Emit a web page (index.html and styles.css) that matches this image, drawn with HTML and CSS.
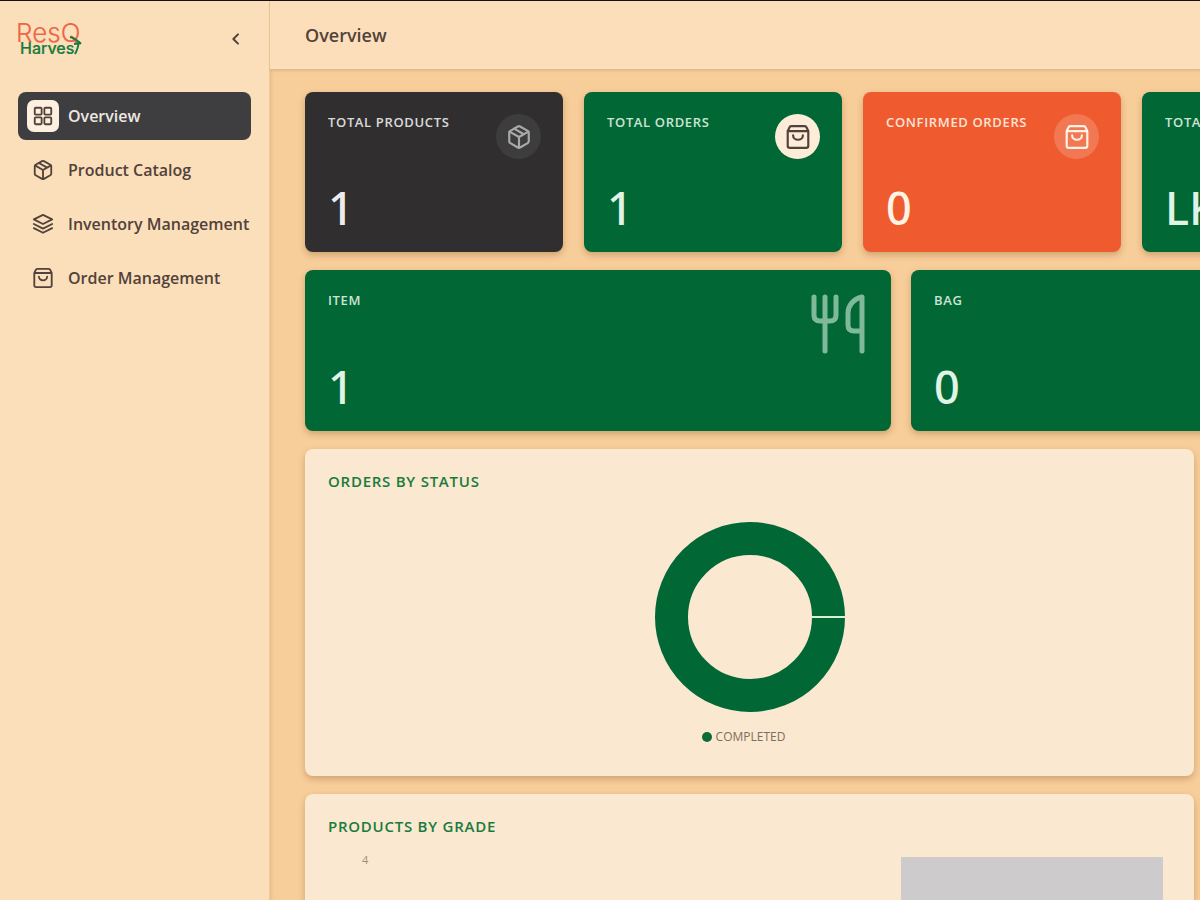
FILE: index.html
```html
<!DOCTYPE html>
<html lang="en">
<head>
    <meta charset="UTF-8">
    <meta name="viewport" content="width=device-width, initial-scale=1.0">
    <title>ResQ Harvest - Overview</title>
    <link rel="stylesheet" href="styles.css">
</head>
<body>
    <!-- Shared icons -->
    <svg class="sprite" aria-hidden="true">
        <symbol id="icon-grid" viewBox="0 0 24 24">
            <rect x="3" y="3" width="7.500" height="7.500" rx="1"/>
            <rect x="13.500" y="3" width="7.500" height="7.500" rx="1"/>
            <rect x="3" y="13.500" width="7.500" height="7.500" rx="1"/>
            <rect x="13.500" y="13.500" width="7.500" height="7.500" rx="1"/>
        </symbol>
        <symbol id="icon-box" viewBox="0 0 24 24">
            <path d="M11 21.7a2 2 0 0 0 2 0l7-4a2 2 0 0 0 1-1.7V8a2 2 0 0 0-1-1.7l-7-4a2 2 0 0 0-2 0l-7 4A2 2 0 0 0 3 8v8a2 2 0 0 0 1 1.7z"/>
            <path d="M12 22V12M3.3 7 12 12l8.7-5M7.5 4.3l9 5.1"/>
        </symbol>
        <symbol id="icon-layers" viewBox="0 0 24 24">
            <path d="M12 2 22 7 12 12 2 7z"/>
            <path d="m2 12 10 5 10-5M2 16.500l10 5 10-5"/>
        </symbol>
        <symbol id="icon-bag" viewBox="0 0 24 24">
            <path d="M2.500 6.500V20a2 2 0 0 0 2 2h15a2 2 0 0 0 2-2V6.500L20 3.500A2 2 0 0 0 18 2H6a2 2 0 0 0-2 1.500zM2.500 6.500h19"/>
            <path d="M16.500 10.500c0 2.300-2 4-4.500 4s-4.500-1.700-4.500-4"/>
        </symbol>
        <symbol id="icon-cutlery" viewBox="0 0 56 60">
            <path d="M4 3v18q0 6 6 6h10q6 0 6-6V3M15 3v54M52 57V3c-9 2-14 9-14 16v12q0 6 6 6h7"/>
        </symbol>
    </svg>

    <div class="app">
        <aside class="sidebar">
            <div class="brand">
                <svg class="logo" viewBox="0 0 68 40" role="img" aria-label="ResQ Harvest">
                    <text class="logo-top" x="-2" y="23">ResQ</text>
                    <text class="logo-bottom" x="2" y="35">Harves</text>
                    <path class="logo-leaf" d="M52 18q5 1 11 7M57 35q3-5 4-13M56 25l7-1"/>
                </svg>
                <button class="collapse" type="button" aria-label="Collapse sidebar">
                    <svg class="icon" viewBox="0 0 24 24"><path d="m15 5-7 7 7 7"/></svg>
                </button>
            </div>
            <nav class="menu">
                <a class="menu-item active" href="#">
                    <span class="menu-icon"><svg class="icon"><use href="#icon-grid"/></svg></span>
                    Overview
                </a>
                <a class="menu-item" href="#">
                    <span class="menu-icon"><svg class="icon"><use href="#icon-box"/></svg></span>
                    Product Catalog
                </a>
                <a class="menu-item" href="#">
                    <span class="menu-icon"><svg class="icon"><use href="#icon-layers"/></svg></span>
                    Inventory Management
                </a>
                <a class="menu-item" href="#">
                    <span class="menu-icon"><svg class="icon"><use href="#icon-bag"/></svg></span>
                    Order Management
                </a>
            </nav>
        </aside>

        <div class="page">
            <header class="topbar">
                <h1>Overview</h1>
            </header>

            <main class="content">
                <section class="stats">
                    <div class="card dark">
                        <h2>Total Products</h2>
                        <span class="badge"><svg class="icon"><use href="#icon-box"/></svg></span>
                        <p class="value">1</p>
                    </div>
                    <div class="card">
                        <h2>Total Orders</h2>
                        <span class="badge light"><svg class="icon"><use href="#icon-bag"/></svg></span>
                        <p class="value">1</p>
                    </div>
                    <div class="card orange">
                        <h2>Confirmed Orders</h2>
                        <span class="badge"><svg class="icon"><use href="#icon-bag"/></svg></span>
                        <p class="value">0</p>
                    </div>
                    <div class="card">
                        <h2>Total</h2>
                        <p class="value">LKR</p>
                    </div>
                </section>

                <section class="stats wide">
                    <div class="card">
                        <h2>Item</h2>
                        <svg class="cutlery"><use href="#icon-cutlery"/></svg>
                        <p class="value">1</p>
                    </div>
                    <div class="card">
                        <h2>Bag</h2>
                        <p class="value">0</p>
                    </div>
                </section>

                <section class="panel">
                    <h2>Orders by Status</h2>
                    <svg class="donut" viewBox="0 0 190 190" role="img" aria-label="Completed orders">
                        <circle class="donut-ring" cx="95" cy="95" r="78.500"/>
                        <path class="donut-gap" d="M157 95h33"/>
                    </svg>
                    <p class="legend"><span class="dot"></span>COMPLETED</p>
                </section>

                <section class="panel">
                    <h2>Products by Grade</h2>
                    <div class="bar-chart">
                        <span class="tick">4</span>
                        <div class="bar"></div>
                    </div>
                </section>
            </main>
        </div>
    </div>
</body>
</html>
```

FILE: styles.css
```css
* {
    margin: 0;
    padding: 0;
    box-sizing: border-box;
}

body {
    font-family: "Open Sans", "Noto Sans", sans-serif;
    color: #51423b;
    background: #f7cd99;
    border-top: 1px solid #141010;
    height: 100vh;
    overflow: hidden;
}

.sprite {
    display: none;
}

.icon {
    width: 20px;
    height: 20px;
    fill: none;
    stroke: currentColor;
    stroke-width: 2;
    stroke-linecap: round;
    stroke-linejoin: round;
}

.app {
    display: flex;
    height: 100%;
}

/* Sidebar */
.sidebar {
    flex: 0 0 270px;
    min-width: 0;
    padding: 18px;
    background: #fbdfba;
    border-right: 1px solid #eecb9c;
    box-shadow: 1px 0 3px rgba(120, 70, 20, 0.15);
}

.brand {
    display: flex;
    justify-content: space-between;
    align-items: center;
    height: 40px;
    margin-bottom: 33px;
}

.logo {
    width: 68px;
    height: 40px;
    overflow: visible;
}

.logo text {
    font-family: Inter, sans-serif;
}

.logo-top {
    font-size: 26px;
    font-weight: 300;
    fill: #ee6547;
    stroke: #ee6547;
    stroke-width: 0.2;
}

.logo-bottom {
    font-size: 16px;
    font-weight: 500;
    fill: #187b3e;
    stroke: #187b3e;
    stroke-width: 0.2;
}

.logo-leaf {
    fill: none;
    stroke: #187b3e;
    stroke-width: 2;
}

.collapse {
    width: 30px;
    height: 30px;
    border: none;
    background: none;
    color: #51423b;
    cursor: pointer;
}

.collapse .icon {
    display: block;
    width: 16px;
    height: 16px;
    margin: auto;
    stroke-width: 3;
}

.menu {
    display: flex;
    flex-direction: column;
    gap: 6px;
}

.menu-item {
    display: flex;
    align-items: center;
    gap: 9px;
    height: 48px;
    padding-left: 9px;
    border-radius: 8px;
    color: #51423b;
    font-size: 16px;
    font-weight: 600;
    text-decoration: none;
    white-space: nowrap;
}

.menu-icon {
    display: flex;
    flex: none;
    align-items: center;
    justify-content: center;
    width: 32px;
    height: 32px;
    border-radius: 7px;
}

.menu-icon .icon {
    width: 22px;
    height: 22px;
}

.menu-item.active {
    background: #3e3d3f;
    color: #eee8e2;
}

.active .menu-icon {
    background: #fdf0e0;
    color: #51423b;
}

/* Page */
.page {
    flex: 1;
    min-width: 0;
}

.topbar {
    display: flex;
    align-items: center;
    height: 69px;
    padding: 0 35px;
    background: #fcdfba;
    border-bottom: 1px solid #dfbe8e;
    box-shadow: 0 1px 2px rgba(120, 70, 20, 0.15);
}

.topbar h1 {
    font-size: 18px;
    font-weight: 600;
}

.content {
    display: flex;
    flex-direction: column;
    gap: 18px;
    padding: 22px 35px;
}

.stats {
    display: grid;
    grid-template-columns: repeat(4, 258px);
    gap: 21px;
}

.stats.wide {
    grid-template-columns: repeat(2, 586px);
    gap: 20px;
}

.card {
    display: grid;
    grid-template-columns: 1fr auto;
    align-content: space-between;
    min-height: 160px;
    padding: 22px 22px 22px 23px;
    border-radius: 8px;
    background: #006735;
    color: #e0f3e4;
    box-shadow: 0 3px 6px rgba(120, 70, 20, 0.3);
}

.wide .card {
    min-height: 161px;
}

.card.dark {
    background: #312e30;
    color: #ececec;
}

.card.orange {
    background: #ef5b2e;
    color: #fff3e6;
}

.card h2 {
    font-size: 13px;
    font-weight: 600;
    line-height: 16px;
    letter-spacing: 0.05em;
    text-transform: uppercase;
    opacity: 0.9;
}

.badge {
    display: flex;
    align-items: center;
    justify-content: center;
    width: 45px;
    height: 45px;
    border-radius: 50%;
    background: rgba(255, 255, 255, 0.18);
}

.badge .icon {
    width: 26px;
    height: 26px;
}

.dark .badge {
    background: #3e3d3e;
    color: #aaa8a9;
}

.badge.light {
    background: #fdedd8;
    color: #51423b;
}

.cutlery {
    width: 56px;
    height: 60px;
    margin: 2px 3px 0 0;
    fill: none;
    stroke: #80b99a;
    stroke-width: 5;
    stroke-linecap: round;
    stroke-linejoin: round;
}

.value {
    grid-column: 1;
    align-self: end;
    font-family: "Noto Sans", "Open Sans", sans-serif;
    font-size: 45px;
    font-weight: 500;
    line-height: 45px;
}

.panel {
    flex: none;
    width: 889px;
    height: 327px;
    padding: 22px 23px;
    border-radius: 8px;
    background: #fbe8d0;
    box-shadow: 0 3px 6px rgba(120, 70, 20, 0.3);
}

.panel h2 {
    color: #187b3e;
    font-size: 15px;
    font-weight: 600;
    line-height: 20px;
    letter-spacing: 0.05em;
    text-transform: uppercase;
}

.donut {
    display: block;
    width: 190px;
    height: 190px;
    margin: 31px auto 14px;
}

.donut-ring {
    fill: none;
    stroke: #006735;
    stroke-width: 33;
}

.donut-gap {
    stroke: #d9efd2;
    stroke-width: 2;
}

.legend {
    display: flex;
    align-items: center;
    justify-content: center;
    gap: 4px;
    padding-right: 12px;
    color: #7d6e60;
    font-size: 12px;
    line-height: 22px;
}

.dot {
    width: 10px;
    height: 10px;
    border-radius: 50%;
    background: #0b6c38;
}

.bar-chart {
    display: flex;
    justify-content: space-between;
    padding: 21px 8px 0 34px;
}

.tick {
    color: #a08f7c;
    font-size: 11px;
    line-height: 6px;
}

.bar {
    width: 262px;
    height: 220px;
    background: #cdcbcb;
}
```
